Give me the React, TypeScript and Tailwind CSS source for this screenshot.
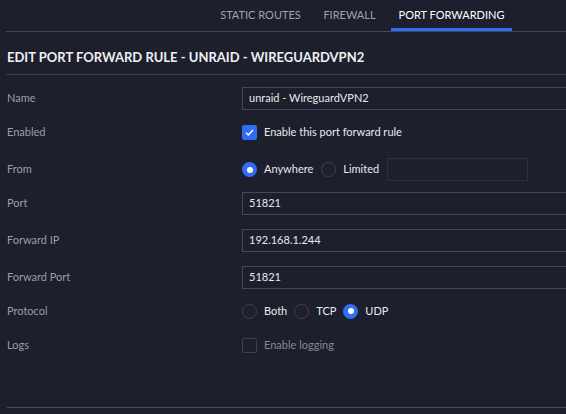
import React from "react";

const Radio = ({ checked, className = "" }: { checked?: boolean; className?: string }) =>
  checked ? (
    <span className={"w-[15px] h-[15px] rounded-full bg-[#2f6df3] flex items-center justify-center shrink-0 " + className}>
      <span className="w-[6px] h-[6px] rounded-full bg-white" />
    </span>
  ) : (
    <span className={"block w-[15px] h-[15px] rounded-full border border-[#3e414c] shrink-0 " + className} />
  );

const Input = ({ value }: { value: string }) => (
  <div className="flex-1 h-[23px] border border-[#464955] border-r-0 flex items-center pl-[6px] text-[11px] text-[#e8e9ec]">
    {value}
  </div>
);

const Label = ({ children }: { children: React.ReactNode }) => (
  <div className="w-[242px] shrink-0 pl-[7px] text-[11px] text-[#9b9ea6]">{children}</div>
);

const Txt = ({ children, muted }: { children: React.ReactNode; muted?: boolean }) => (
  <span className={muted ? "ml-[7px] text-[11px] text-[#868993]" : "ml-[7px] text-[11px] text-[#e8e9ec]"}>
    {children}
  </span>
);

export default function App() {
  return (
    <div
      className="w-[566px] h-[414px] bg-[#1d1f2c] overflow-hidden"
      style={{ fontFamily: "Lato, 'Noto Sans', sans-serif" }}
    >
      <div className="ml-[6px] h-[32px] border-b border-[#444752] flex justify-end items-stretch pr-[54px] text-[11px]">
        <div className="w-[95px] flex items-center justify-center text-[#9fa2aa]">STATIC ROUTES</div>
        <div className="ml-[8px] w-[67px] flex items-center justify-center text-[#9fa2aa]">FIREWALL</div>
        <div className="ml-[8px] w-[121px] flex items-center justify-center text-white border-b-[3px] border-[#2f6df3] pt-[3px]">
          PORT FORWARDING
        </div>
      </div>
      <div className="ml-[6px] h-[43px] pt-[9px] border-b border-[#3a3d48] flex items-center pl-[1px] text-[13px] font-bold text-[#eef0f3]">
        EDIT PORT FORWARD RULE - UNRAID - WIREGUARDVPN2
      </div>
      <div className="flex flex-col">
        <div className="flex items-center mt-[12px]">
          <Label>Name</Label>
          <Input value="unraid - WireguardVPN2" />
        </div>
        <div className="flex items-center mt-[14px] h-[16px]">
          <Label>Enabled</Label>
          <span className="w-[15px] h-[15px] rounded-[2px] bg-[#2f6df3] flex items-center justify-center shrink-0">
            <svg width="11" height="11" viewBox="0 0 11 11" fill="none">
              <path d="M2 5.8 L4.3 8 L9 3" stroke="white" strokeWidth="1.5" />
            </svg>
          </span>
          <Txt>Enable this port forward rule</Txt>
        </div>
        <div className="flex items-center mt-[18px] h-[23px]">
          <Label>From</Label>
          <Radio checked />
          <Txt>Anywhere</Txt>
          <Radio className="ml-[8px]" />
          <Txt>Limited</Txt>
          <div className="ml-[8px] w-[141px] h-[23px] border border-[#2e313c]" />
        </div>
        <div className="flex items-center mt-[11px]">
          <Label>Port</Label>
          <Input value="51821" />
        </div>
        <div className="flex items-center mt-[14px]">
          <Label>Forward IP</Label>
          <Input value="192.168.1.244" />
        </div>
        <div className="flex items-center mt-[14px]">
          <Label>Forward Port</Label>
          <Input value="51821" />
        </div>
        <div className="flex items-center mt-[14px] h-[16px]">
          <Label>Protocol</Label>
          <Radio />
          <Txt>Both</Txt>
          <Radio className="ml-[7px]" />
          <Txt>TCP</Txt>
          <Radio checked className="ml-[7px]" />
          <Txt>UDP</Txt>
        </div>
        <div className="flex items-center mt-[18px] h-[16px]">
          <Label>Logs</Label>
          <span className="w-[15px] h-[15px] rounded-[2px] border border-[#3e414c] shrink-0" />
          <Txt muted>Enable logging</Txt>
        </div>
      </div>
      <div className="ml-[7px] mt-[54px] border-b border-[#4a4d58]" />
    </div>
  );
}
